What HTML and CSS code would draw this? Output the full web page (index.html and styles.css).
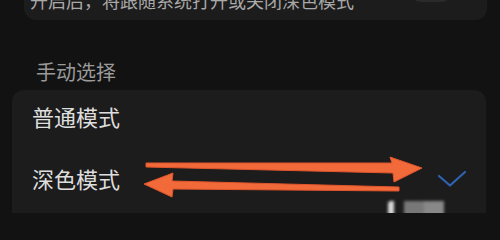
FILE: index.html
```html
<!DOCTYPE html>
<html lang="zh-CN">
<head>
<meta charset="utf-8">
<title>深色模式</title>
<link rel="stylesheet" href="styles.css">
</head>
<body>
<div class="page">
  <div class="card top-card">
    <span class="desc">开启后，将跟随系统打开或关闭深色模式</span>
    <span class="toggle"></span>
  </div>
  <div class="section-label">手动选择</div>
  <div class="card list-card">
    <div class="row"><span class="row-text">普通模式</span></div>
    <div class="row">
      <span class="row-text">深色模式</span>
      <svg class="check" width="28" height="16" viewBox="0 0 28 16"><polyline points="1,5 12,14.5 27,1" fill="none" stroke="#2f62b3" stroke-width="2.2" stroke-linecap="round" stroke-linejoin="round"/></svg>
    </div>
  </div>
  <svg class="arrows" width="500" height="213" viewBox="0 0 500 213">
    <polygon points="146,163 392,163 390,157 422,168 394,182 393,173 146,167" fill="#f26a3a" stroke="#e0552c" stroke-width="1"/>
    <polygon points="144,184 173,173 172,181 399,187 399,191 173,189 172,197" fill="#f26a3a" stroke="#e0552c" stroke-width="1"/>
  </svg>
  <div class="watermark"></div>
</div>
</body>
</html>
```

FILE: styles.css
```css
html, body {
  margin: 0;
  padding: 0;
  background: #121212;
}
body {
  width: 500px;
  height: 213px;
  overflow: hidden;
  font-family: "Noto Sans CJK SC", "Noto Sans", sans-serif;
}
.page {
  position: relative;
  width: 500px;
  height: 213px;
  overflow: hidden;
  background: #121212;
}
.card {
  background: #1c1c1c;
  border-radius: 12px;
}
.top-card {
  margin: -40px 13px 0 24px;
  height: 60px;
  box-sizing: border-box;
  display: flex;
  align-items: flex-end;
  padding: 0 0 11px 6px;
}
.desc {
  font-size: 18px;
  line-height: 18px;
  color: #a9a9a9;
  white-space: nowrap;
}
.toggle {
  margin-left: auto;
  margin-right: 34px;
  margin-bottom: 7px;
  width: 44px;
  height: 24px;
  border-radius: 12px;
  background: #2a2a2a;
  align-self: flex-end;
}
.section-label {
  margin: 42px 0 0 36px;
  font-size: 20px;
  line-height: 20px;
  color: #9a9a9a;
}
.list-card {
  margin: 8px 14px 0 12px;
  height: 200px;
  display: flex;
  flex-direction: column;
}
.row {
  height: 62px;
  box-sizing: border-box;
  display: flex;
  align-items: flex-start;
  padding: 15px 20px 0 20px;
}
.row-text {
  font-size: 22px;
  line-height: 22px;
  color: #dedede;
}
.check {
  margin-left: auto;
  margin-top: 4px;
}
.arrows {
  position: absolute;
  left: 0;
  top: 0;
}
.watermark {
  position: absolute;
  left: 388px;
  top: 201px;
  width: 60px;
  height: 16px;
  background: linear-gradient(90deg, #d8d8d8 0 6px, #1c1c1c 6px 16px, #777 16px 36px, #888 36px 56px, transparent 56px);
  filter: blur(1.5px);
  border-radius: 3px;
}
```
